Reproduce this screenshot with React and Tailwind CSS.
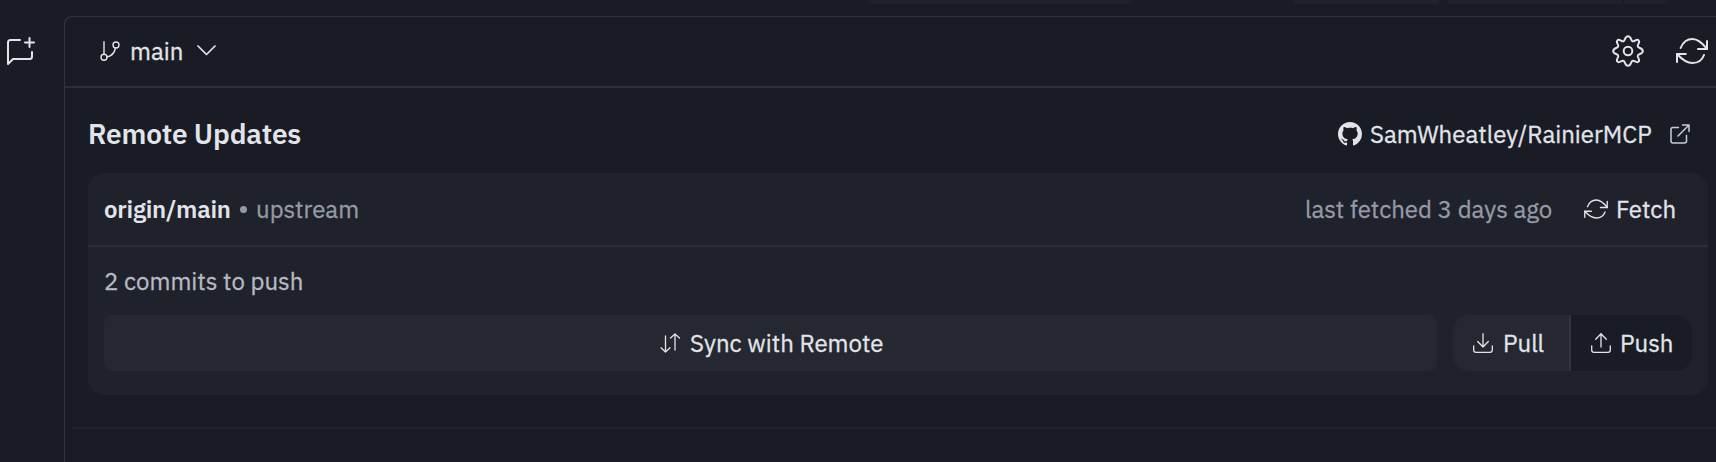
const Svg = ({ className, children, w = 1.6, vb = "0 0 24 24" }) => (
  <svg viewBox={vb} className={className} fill="none" stroke="currentColor" strokeWidth={w} strokeLinecap="round" strokeLinejoin="round">
    {children}
  </svg>
);

const Refresh = ({ className, w }) => (
  <Svg className={className} w={w} vb="0 0 32 26">
    <path d="M4.600 10 C7 4 11.500 1 16.500 1 C22 1 26 4.500 31 11" />
    <path d="M31 3 V11 H22" />
    <path d="M28 17 C26 22.500 21.500 25 16.500 25 C10.500 25 6 21.500 1 16" />
    <path d="M1 24 V16 H9.800" />
  </Svg>
);

const Gear = () => (
  <Svg className="h-8 w-8" vb="0 0 32 32" w={2}>
    <circle cx="16" cy="16" r="4.300" />
    <path d="M16 1.200 C19.400 1.200 18.600 5.600 20.500 6.200 C22.400 7 24.600 3.400 26.600 5.400 C28.600 7.400 25 9.600 25.800 11.500 C26.400 13.400 30.800 12.600 30.800 16 C30.800 19.400 26.400 18.600 25.800 20.500 C25 22.400 28.600 24.600 26.600 26.600 C24.600 28.600 22.400 25 20.500 25.800 C18.600 26.400 19.400 30.800 16 30.800 C12.600 30.800 13.400 26.400 11.500 25.800 C9.600 25 7.400 28.600 5.400 26.600 C3.400 24.600 7 22.400 6.200 20.500 C5.600 18.600 1.200 19.400 1.200 16 C1.200 12.600 5.600 13.400 6.200 11.500 C7 9.600 3.400 7.400 5.400 5.400 C7.400 3.400 9.600 7 11.500 6.200 C13.400 5.600 12.600 1.200 16 1.200 Z" />
  </Svg>
);

export default function App() {
  return (
    <div className="flex h-[462px] w-[1716px] overflow-hidden bg-[#191c24] font-['IBM_Plex_Sans',Roboto,sans-serif] text-2xl leading-8 font-normal whitespace-nowrap text-[#e1e4ea] [-webkit-text-stroke:0.3px]">
      <aside className="w-16 shrink-0 pt-[37px] pl-[7px]">
        <Svg className="h-7 w-7" vb="0 0 28 28" w={2}>
          <path d="M13 3 H3.500 Q1 3 1 5.500 V27 L6 22 H22.500 Q25 22 25 19.500 V15" />
          <path d="M22.500 1 V10 M18 5.600 H27" />
        </Svg>
      </aside>
      <div className="flex min-w-0 flex-1 flex-col">
        <div className="flex h-4 shrink-0 items-start">
          <div className="ml-[804px] h-1 w-[264px] rounded-b-md bg-[#1f222a]" />
          <div className="ml-[161px] h-1 w-[146px] rounded-b-md bg-[#1f222a]" />
          <div className="ml-2 h-1 w-[175px] rounded-bl-md bg-[#1f222a]" />
          <div className="ml-0.5 h-1 w-[44px] rounded-br-md bg-[#1f222a]" />
        </div>
        <main className="-mr-4 flex flex-1 flex-col rounded-tl-lg border-t border-l border-[#31343d]">
          <header className="flex h-[71px] shrink-0 items-center border-b-2 border-[#2b2e36] pr-6 pb-0.5 pl-[35px]">
            <Svg className="mt-px h-5 w-5" vb="0 0 20 20" w={1.4}>
              <path d="M4 .7 V13" />
              <circle cx="4" cy="16.300" r="3" />
              <circle cx="16" cy="4" r="3" />
              <path d="M15.500 7 Q14 14.500 7 16" />
            </Svg>
            <span className="ml-[10px] w-[56px]">main</span>
            <Svg className="ml-[11px] h-[11px] w-[19px]" vb="0 0 19 11" w={1.7}>
              <path d="M1 1 L9.500 9.500 L18 1" />
            </Svg>
            <div className="ml-auto flex items-center gap-8">
              <Gear />
              <Refresh className="h-[26px] w-8" w={2} />
            </div>
          </header>
          <div className="flex h-[85px] shrink-0 items-center pt-[7px] pr-[42px] pl-[23px]">
            <h1 className="text-[28px] font-semibold tracking-[-0.15px] [-webkit-text-stroke:0]">Remote Updates</h1>
            <div className="ml-auto flex items-center">
              <svg viewBox="0 0 16 16" className="h-6 w-6" fill="currentColor">
                <path d="M8 0C3.580 0 0 3.580 0 8c0 3.540 2.290 6.530 5.470 7.590.4.070.55-.17.55-.38 0-.19-.01-.82-.01-1.490-2.010.37-2.530-.49-2.690-.94-.09-.23-.48-.94-.82-1.130-.28-.15-.68-.52-.01-.53.63-.01 1.080.58 1.230.82.72 1.210 1.870.87 2.330.66.07-.52.28-.87.51-1.070-1.780-.2-3.640-.89-3.640-3.950 0-.87.31-1.590.82-2.150-.08-.2-.36-1.020.08-2.120 0 0 .67-.21 2.200.82.64-.18 1.320-.27 2-.27s1.360.09 2 .27c1.530-1.040 2.200-.82 2.200-.82.44 1.100.16 1.920.08 2.120.51.56.82 1.270.82 2.150 0 3.070-1.870 3.750-3.650 3.950.29.25.54.73.54 1.480 0 1.070-.01 1.930-.01 2.200 0 .21.15.46.55.38A8.010 8.010 0 0 0 16 8c0-4.420-3.580-8-8-8Z" />
              </svg>
              <span className="ml-2 w-[284px]">SamWheatley/RainierMCP</span>
              <Svg className="ml-[16px] h-5 w-5 text-[#c8cbd2]" vb="0 0 20 20" w={1.5}>
                <path d="M8.500 3.500 H3 Q1 3.500 1 5.500 V17 Q1 19 3 19 H14.500 Q16.500 19 16.500 17 V11.500" />
                <path d="M12.500 1 H19 V7.500 M19 1 L8 12" />
              </Svg>
            </div>
          </div>
          <section className="ml-[23px] flex h-[222px] w-[1620px] shrink-0 flex-col rounded-2xl bg-[#1f222a]">
            <div className="flex h-[74px] items-center border-b-2 border-[#2b2e36] pr-8 pl-4">
              <span className="w-[127px] font-semibold tracking-[-0.22px] [-webkit-text-stroke:0]">origin/main</span>
              <span className="ml-[9px] h-[7px] w-[7px] rounded-full bg-[#959aa6]" />
              <span className="ml-[9px] text-[#959aa6]">upstream</span>
              <span className="ml-auto w-[247px] text-[#959aa6]">last fetched 3 days ago</span>
              <Refresh className="ml-[32px] h-5 w-6" w={1.8} />
              <span className="ml-2 w-[60px]">Fetch</span>
            </div>
            <p className="mt-[18px] pl-4 text-[#b6bac3]">2 commits to push</p>
            <div className="mt-[18px] flex h-14 gap-4 px-4">
              <button className="flex w-[1333px] items-center rounded-lg bg-[#252830] pl-[556px]">
                <Svg className="h-5 w-5" vb="0 0 20 20" w={1.3}>
                  <path d="M5.500 3 V19 M1 14.800 L5.500 19 L10 14.800" />
                  <path d="M15 17 V1 M10.500 5 L15 1 L19.500 5" />
                </Svg>
                <span className="ml-[10px]">Sync with Remote</span>
              </button>
              <div className="flex">
                <button className="flex w-[118px] items-center rounded-l-2xl border-r-2 border-[#31343d] bg-[#252830] pl-5">
                  <Svg className="h-5 w-5" vb="0 0 20 20" w={1.3}>
                    <path d="M10 .7 V14 M4.700 8.500 L10 14 L15.300 8.500" />
                    <path d="M.7 13 V17 Q.7 19.300 3 19.300 H17 Q19.300 19.300 19.300 17 V13" />
                  </Svg>
                  <span className="ml-[10px]">Pull</span>
                </button>
                <button className="flex w-[121px] items-center rounded-r-2xl bg-[#191c24] pl-5">
                  <Svg className="h-5 w-5" vb="0 0 20 20" w={1.3}>
                    <path d="M10 14 V.7 M4.700 6.200 L10 .7 L15.300 6.200" />
                    <path d="M.7 13 V17 Q.7 19.300 3 19.300 H17 Q19.300 19.300 19.300 17 V13" />
                  </Svg>
                  <span className="ml-[9px]">Push</span>
                </button>
              </div>
            </div>
          </section>
          <hr className="mt-8 ml-[7px] border-t-2 border-[#20232b]" />
        </main>
      </div>
    </div>
  );
}
